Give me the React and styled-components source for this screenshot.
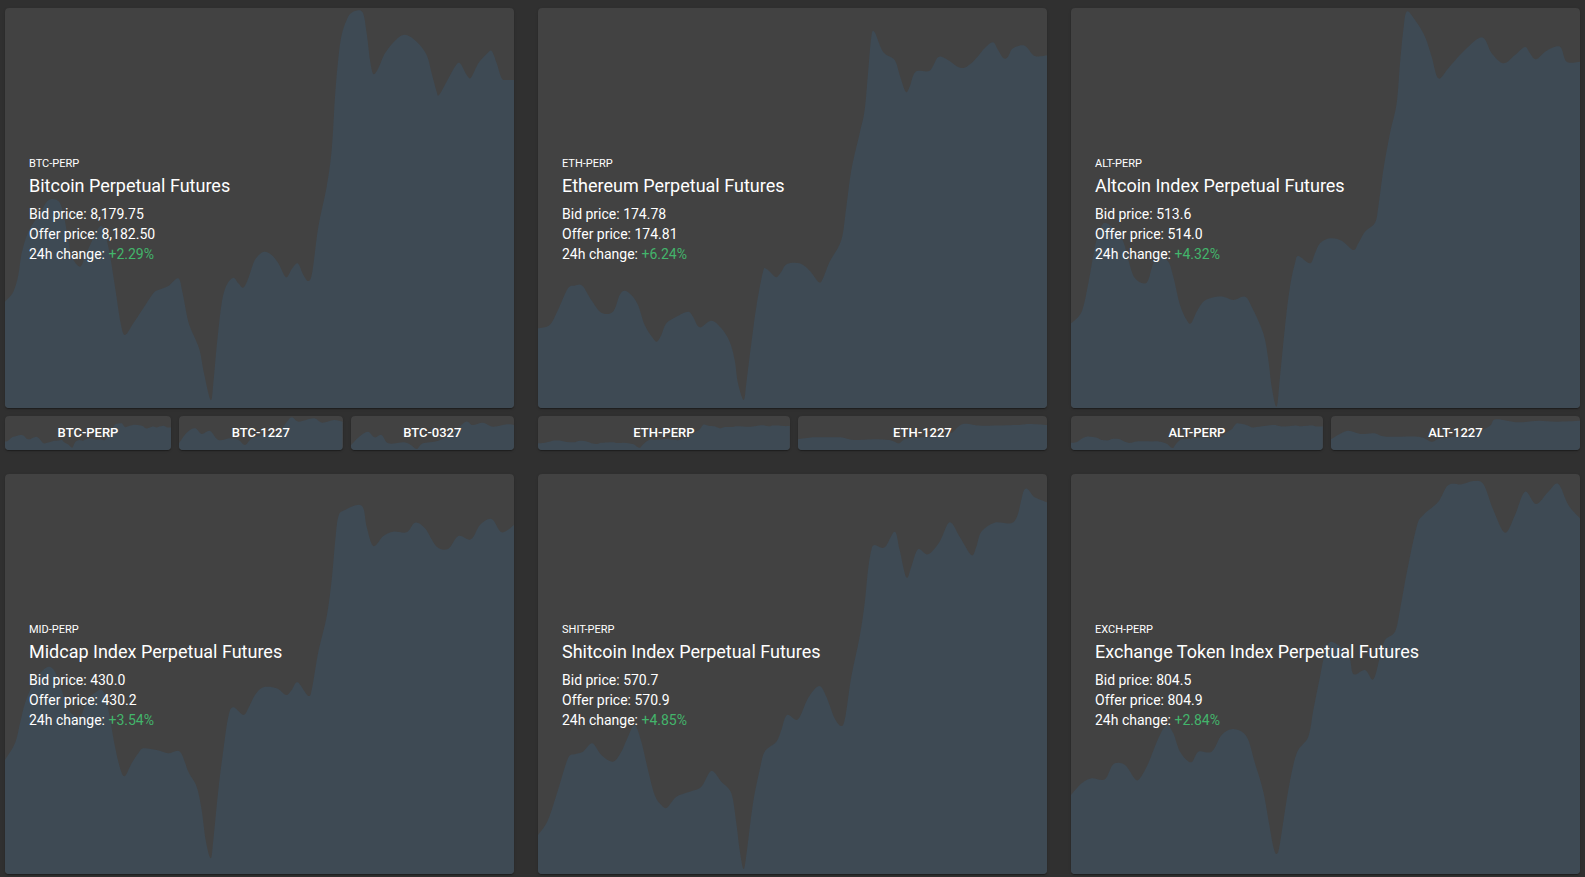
import React from "react";
import styled, { createGlobalStyle } from "styled-components";

// traced by hand from the reference, 3x card pixels
const BTC = "15,905 40,875 55,825 65,760 85,695 120,640 145,601 175,603 190,640 205,720 215,770 240,800 255,770 280,715 305,678 325,740 345,860 362,970 375,1005 400,970 430,925 460,880 475,870 505,858 535,835 548,880 565,965 585,1015 600,1055 612,1120 632,1200 640,1150 650,1040 665,910 680,855 700,833 715,850 730,863 745,835 762,785 780,762 795,755 815,765 835,790 858,832 875,808 893,790 910,825 925,843 937,815 955,680 980,560 995,450 1005,290 1015,175 1025,105 1040,60 1055,38 1087,36 1100,100 1110,180 1120,222 1135,205 1155,160 1185,122 1215,104 1250,125 1280,165 1295,220 1310,275 1317,285 1340,245 1365,200 1380,190 1400,225 1413,233 1435,190 1460,162 1475,153 1490,190 1505,235 1520,240 1542,240";
const ETH = "15,985 50,975 75,930 105,865 125,857 148,857 175,900 205,938 240,935 260,885 275,872 295,885 315,915 335,975 360,1015 372,1025 385,1005 400,970 430,950 465,935 480,950 500,982 535,962 565,985 590,1025 605,1080 615,1150 632,1200 640,1150 655,1030 670,920 690,815 700,807 715,820 730,832 745,815 762,792 800,790 830,812 858,847 870,835 890,785 925,720 940,620 955,510 980,400 995,330 1005,220 1015,110 1025,97 1050,155 1085,180 1100,225 1118,275 1130,260 1148,215 1190,212 1215,172 1240,177 1285,204 1320,185 1355,145 1380,127 1395,150 1412,175 1425,170 1440,145 1475,137 1505,168 1542,166";
const ALT = "18,970 50,935 70,850 90,740 105,690 120,668 150,690 175,725 190,780 210,835 245,848 265,790 285,770 310,785 325,830 345,915 365,960 378,970 395,935 415,905 440,893 475,890 505,900 540,890 560,920 595,1000 610,1080 620,1160 635,1220 645,1130 660,980 675,860 690,790 700,768 735,790 750,760 765,730 795,715 830,722 865,750 880,730 900,695 930,668 940,620 955,510 975,400 995,310 1005,190 1015,90 1025,35 1050,60 1080,110 1100,170 1120,235 1150,205 1190,160 1250,112 1280,160 1315,190 1350,165 1380,141 1395,160 1413,178 1445,152 1485,140 1505,185 1545,185";
const MID = "15,870 45,820 60,760 75,700 95,650 120,610 145,590 165,605 185,660 205,720 240,740 260,690 285,668 308,662 325,720 345,830 362,900 375,918 395,880 415,850 430,835 470,840 505,850 540,845 565,905 590,950 605,1020 617,1110 632,1165 640,1110 655,960 670,840 685,740 700,712 730,735 745,715 765,675 790,652 830,655 858,675 875,660 893,637 925,678 937,650 955,545 980,440 995,330 1005,220 1015,140 1035,120 1085,107 1100,170 1120,228 1150,198 1180,185 1220,187 1245,158 1275,175 1310,230 1345,236 1375,198 1413,208 1440,165 1475,147 1505,187 1542,165";
const SHIT = "15,1095 45,1050 75,960 105,865 125,853 150,845 178,820 205,855 240,875 265,845 285,800 305,765 325,815 345,900 365,975 385,1005 402,1013 430,980 470,965 505,950 535,903 565,935 595,970 610,1060 620,1140 632,1197 642,1140 660,1000 680,900 695,845 730,815 745,780 762,735 795,748 825,685 858,648 880,680 905,745 925,768 937,740 955,620 980,500 995,400 1005,300 1015,240 1025,225 1055,232 1085,185 1100,240 1120,322 1135,290 1155,238 1185,253 1220,215 1250,157 1280,200 1315,255 1330,230 1345,185 1385,158 1445,153 1475,58 1505,82 1542,97";
const EXCH = "18,975 50,940 80,925 120,928 145,883 180,885 210,927 225,925 250,880 280,805 305,765 325,790 345,845 378,877 400,845 440,845 470,795 505,777 545,800 570,880 595,965 612,1060 625,1130 635,1152 645,1120 670,960 695,850 730,800 745,720 765,620 780,550 800,515 850,555 865,612 900,600 925,628 945,560 960,510 990,485 1005,420 1025,310 1055,170 1075,135 1120,95 1150,45 1190,43 1225,33 1255,42 1285,120 1320,188 1350,135 1380,65 1413,102 1450,65 1480,42 1510,105 1545,145";

const BTC_1227 = "537,100 560,68 585,55 605,72 630,63 655,90 690,85 715,90 735,105 755,85 790,75 830,72 860,35 875,22 895,35 940,25 965,38 1000,30 1026,35";
const BTC_0327 = "1016,195 1040,170 1065,155 1085,172 1105,165 1125,190 1170,187 1190,195 1208,207 1225,190 1270,182 1310,160 1350,125 1370,135 1400,128 1430,140 1470,133 1492,135";
const ETH_1227 = "807,178 850,172 880,172 930,172 970,180 1040,178 1080,182 1100,190 1125,175 1200,170 1250,160 1285,132 1340,137 1440,135 1480,132 1530,135";
const ALT_1227 = "824,178 870,153 910,162 950,160 985,170 1080,170 1118,185 1145,175 1220,165 1285,140 1305,118 1370,127 1430,122 1480,125 1552,122";

const markets = [
  {
    symbol: "BTC-PERP",
    name: "Bitcoin Perpetual Futures",
    bid: "8,179.75",
    offer: "8,182.50",
    change: "+2.29%",
    points: BTC,
    origin: [15, 24],
    related: [
      { symbol: "BTC-PERP", points: BTC, box: [15, -315, 1527, 1626] },
      { symbol: "BTC-1227", points: BTC_1227, box: [537, 18, 489, 102] },
      { symbol: "BTC-0327", points: BTC_0327, box: [1016, 108, 476, 102] },
    ],
  },
  {
    symbol: "ETH-PERP",
    name: "Ethereum Perpetual Futures",
    bid: "174.78",
    offer: "174.81",
    change: "+6.24%",
    points: ETH,
    origin: [15, 24],
    related: [
      { symbol: "ETH-PERP", points: ETH, box: [15, -315, 1527, 1626] },
      { symbol: "ETH-1227", points: ETH_1227, box: [807, 108, 723, 102] },
    ],
  },
  {
    symbol: "ALT-PERP",
    name: "Altcoin Index Perpetual Futures",
    bid: "513.6",
    offer: "514.0",
    change: "+4.32%",
    points: ALT,
    origin: [18, 24],
    related: [
      { symbol: "ALT-PERP", points: ALT, box: [18, -315, 1527, 1626] },
      { symbol: "ALT-1227", points: ALT_1227, box: [824, 108, 728, 102] },
    ],
  },
  {
    symbol: "MID-PERP",
    name: "Midcap Index Perpetual Futures",
    bid: "430.0",
    offer: "430.2",
    change: "+3.54%",
    points: MID,
    origin: [15, 12],
  },
  {
    symbol: "SHIT-PERP",
    name: "Shitcoin Index Perpetual Futures",
    bid: "570.7",
    offer: "570.9",
    change: "+4.85%",
    points: SHIT,
    origin: [15, 12],
  },
  {
    symbol: "EXCH-PERP",
    name: "Exchange Token Index Perpetual Futures",
    bid: "804.5",
    offer: "804.9",
    change: "+2.84%",
    points: EXCH,
    origin: [18, 12],
  },
];

const smoothPath = (points, bottom) => {
  const pts = points.split(" ").map((p) => p.split(",").map(Number));
  let d = `M${pts[0][0]} ${bottom}L${pts[0][0]} ${pts[0][1]}`;
  for (let i = 0; i < pts.length - 1; i++) {
    const p0 = pts[i - 1] || pts[i];
    const p1 = pts[i];
    const p2 = pts[i + 1];
    const p3 = pts[i + 2] || p2;
    const c1x = p1[0] + (p2[0] - p0[0]) / 6;
    const c1y = p1[1] + (p2[1] - p0[1]) / 6;
    const c2x = p2[0] - (p3[0] - p1[0]) / 6;
    const c2y = p2[1] - (p3[1] - p1[1]) / 6;
    d += `C${c1x} ${c1y} ${c2x} ${c2y} ${p2[0]} ${p2[1]}`;
  }
  return `${d}L${pts[pts.length - 1][0]} ${bottom}Z`;
};

const AreaChart = ({ points, box }) => (
  <ChartSvg viewBox={box.join(" ")} preserveAspectRatio="none">
    <path d={smoothPath(points, box[1] + box[3])} fill="#3e4a54" />
  </ChartSvg>
);

const MarketCard = ({ market }) => (
  <Column>
    <Card>
      <AreaChart points={market.points} box={[...market.origin, 1527, 1200]} />
      <Symbol>{market.symbol}</Symbol>
      <Name>{market.name}</Name>
      <Line>Bid price: {market.bid}</Line>
      <Line>Offer price: {market.offer}</Line>
      <Line>
        24h change: <Change>{market.change}</Change>
      </Line>
    </Card>
    {market.related && (
      <Related>
        {market.related.map((el) => (
          <RelatedButton key={el.symbol}>
            <AreaChart points={el.points} box={el.box} />
            <RelatedLabel>{el.symbol}</RelatedLabel>
          </RelatedButton>
        ))}
      </Related>
    )}
  </Column>
);

export default function App() {
  return (
    <>
      <GlobalStyle />
      <Page>
        {markets.map((el) => (
          <MarketCard key={el.symbol} market={el} />
        ))}
      </Page>
    </>
  );
}

const GlobalStyle = createGlobalStyle`
  html, body {
    margin: 0;
    background: #303030;
    font-family: Roboto, "Liberation Sans", sans-serif;
    color: #fff;
  }
`;

const Page = styled.div`
  display: grid;
  grid-template-columns: repeat(3, 509px);
  column-gap: 24px;
  row-gap: 24px;
  padding: 8px 5px 3px;
  align-items: start;
`;

const Column = styled.div`
  display: flex;
  flex-direction: column;
  gap: 8px;
`;

const Card = styled.div`
  position: relative;
  height: 400px;
  box-sizing: border-box;
  padding: 4px 24px 0;
  display: flex;
  flex-direction: column;
  justify-content: center;
  overflow: hidden;
  background: #424242;
  border-radius: 4px;
  box-shadow: 0 2px 1px -1px rgba(0, 0, 0, 0.2), 0 1px 1px 0 rgba(0, 0, 0, 0.14), 0 1px 3px 0 rgba(0, 0, 0, 0.12);
`;

const ChartSvg = styled.svg`
  position: absolute;
  inset: 0;
  width: 100%;
  height: 100%;
  display: block;
`;

const Symbol = styled.div`
  position: relative;
  padding-top: 2px;
  font-size: 11px;
  font-weight: 400;
  line-height: 12px;
`;

const Name = styled.div`
  position: relative;
  font-size: 18px;
  font-weight: 400;
  line-height: 32px;
  margin-bottom: 2px;
`;

const Line = styled.div`
  position: relative;
  font-size: 14px;
  line-height: 20px;
`;

const Change = styled.span`
  color: #43b56b;
`;

const Related = styled.div`
  display: flex;
  gap: 8px;
`;

const RelatedButton = styled.div`
  position: relative;
  flex: 1 1 auto;
  height: 34px;
  box-sizing: border-box;
  padding-bottom: 2px;
  display: flex;
  align-items: center;
  justify-content: center;
  overflow: hidden;
  background: #424242;
  border-radius: 4px;
  box-shadow: 0 2px 1px -1px rgba(0, 0, 0, 0.2), 0 1px 1px 0 rgba(0, 0, 0, 0.14), 0 1px 3px 0 rgba(0, 0, 0, 0.12);
`;

const RelatedLabel = styled.span`
  position: relative;
  font-size: 13px;
  font-weight: 500;
`;
